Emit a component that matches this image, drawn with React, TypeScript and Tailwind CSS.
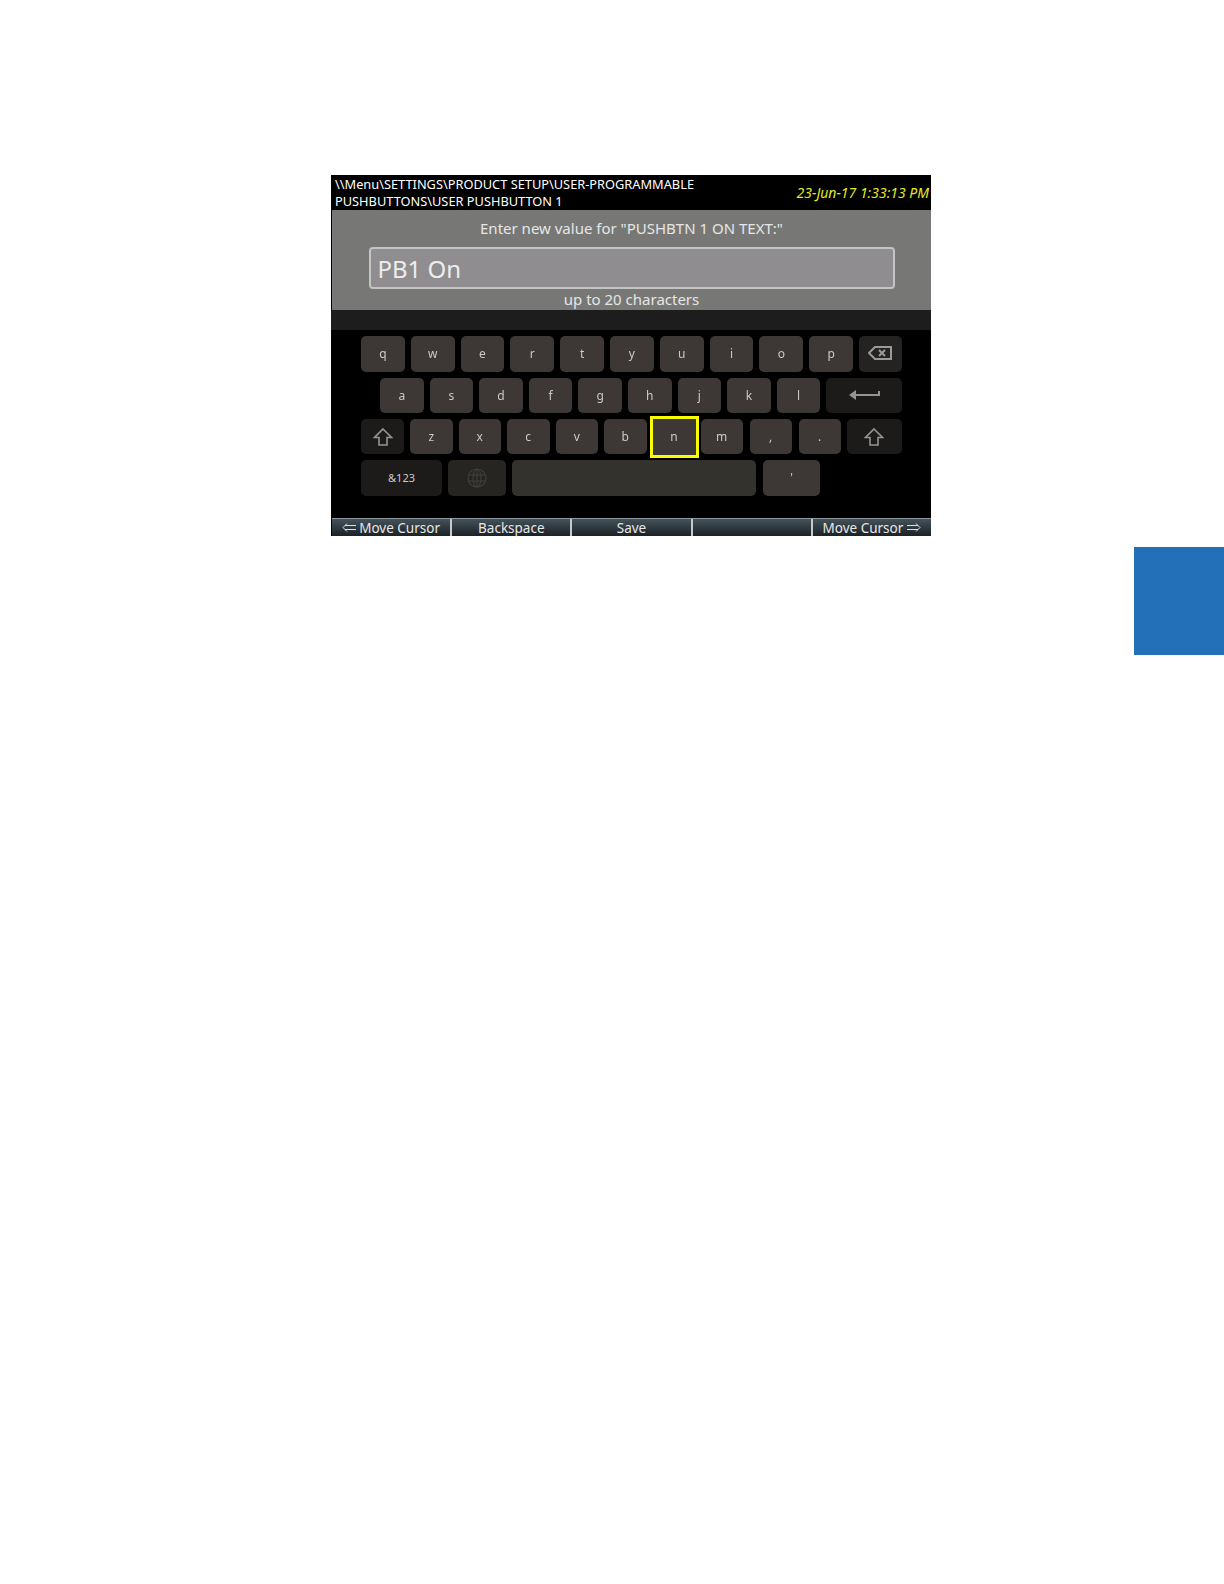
const font = { fontFamily: '"Noto Sans", "Open Sans", sans-serif' };

type KeyProps = {
  label?: string;
  width: string;
  tone?: string;
  children?: React.ReactNode;
};

function Key({ label, width, tone = 'bg-[#3e3937]', children }: KeyProps) {
  return (
    <div className={`${width} ${tone} h-full rounded-[5px] flex items-center justify-center text-[12px] text-[#cfcccb]`}>
      {label}
      {children}
    </div>
  );
}

function ShiftIcon() {
  return (
    <svg width="20" height="20" viewBox="0 0 20 20" fill="none" stroke="#969696" strokeWidth="1.6">
      <path d="M10 2 L18.5 10.5 H14 V18 H6 V10.5 H1.5 Z" />
    </svg>
  );
}

function BackspaceIcon() {
  return (
    <svg width="24" height="14" viewBox="0 0 24 14" fill="none" stroke="#9c9c9c" strokeWidth="2" className="-mt-[2px]">
      <path d="M7 1 H23 V13 H7 L1 7 Z" />
      <path d="M11 4 L17 10 M17 4 L11 10" />
    </svg>
  );
}

function EnterIcon() {
  return (
    <svg width="32" height="12" viewBox="0 0 32 12" fill="#969696" className="-mt-[2px] ml-[2px]">
      <path d="M0 6 L7 1 V5 H29 V2 H31 V7 H7 V11 Z" />
    </svg>
  );
}

function GlobeIcon() {
  return (
    <svg width="20" height="20" viewBox="0 0 20 20" fill="none" stroke="#42403c" strokeWidth="1.1">
      <circle cx="10" cy="10" r="9" />
      <ellipse cx="10" cy="10" rx="4" ry="9" />
      <path d="M10 1 V19 M1.5 7 H18.5 M1.5 13 H18.5" />
    </svg>
  );
}

function ArrowLeft() {
  return (
    <svg width="14" height="9" viewBox="0 0 14 9" fill="none" stroke="#e0e0e0" strokeWidth="1" className="mr-[3px]">
      <path d="M14 2.5 H3 M14 6.5 H3 M5 0.5 L1 4.5 L5 8.5" />
    </svg>
  );
}

function ArrowRight() {
  return (
    <svg width="14" height="9" viewBox="0 0 14 9" fill="none" stroke="#e0e0e0" strokeWidth="1" className="ml-[4px]">
      <path d="M0 2.5 H11 M0 6.5 H11 M9 0.5 L13 4.5 L9 8.5" />
    </svg>
  );
}

export default function App() {
  const softKeys = ['Move Cursor', 'Backspace', 'Save', '', 'Move Cursor'];

  return (
    <div className="flex min-h-[1584px] w-[1224px] bg-white" style={font}>
      <div className="ml-[331px] mt-[175px] h-[361px] w-[600px] bg-black flex flex-col">
        {/* Header */}
        <div className="h-[35px] flex justify-between text-[12.8px] leading-[17px] text-white pl-[4px] pr-[2px] pt-[1px]">
          <div className="w-[420px] whitespace-nowrap">
            <div>\\Menu\SETTINGS\PRODUCT SETUP\USER-PROGRAMMABLE</div>
            <div>PUSHBUTTONS\USER PUSHBUTTON 1</div>
          </div>
          <div className="mt-[8px] italic text-[14px] text-[#e2ea2a] whitespace-nowrap">23-Jun-17 1:33:13 PM</div>
        </div>

        {/* Prompt */}
        <div className="h-[100px] bg-[#777876] flex flex-col items-center text-[#e6e6e6] ml-[1px]">
          <div className="mt-[9px] h-[18px] text-[15px] leading-[18px]">Enter new value for "PUSHBTN 1 ON TEXT:"</div>
          <div className="mt-[10px] h-[42px] w-[526px] rounded-[4px] border-2 border-[#c4c4c4] bg-[#8f8d90] pl-[7px] text-[24px] leading-[40px] text-[#ededed]">
            PB1 On
          </div>
          <div className="mt-[1px] text-[15px] leading-[18px]">up to 20 characters</div>
        </div>
        <div className="h-[20px] bg-[#1d1d1d]" />

        {/* Keyboard */}
        <div className="flex-1 flex flex-col pt-[6px] opacity-[0.99]">
          <div className="h-[36px] flex gap-[6px] pl-[30px]">
            {['q', 'w', 'e', 'r', 't', 'y', 'u', 'i', 'o', 'p'].map((k) => (
              <Key key={k} label={k} width="w-[43.8px]" />
            ))}
            <Key width="w-[43px]" tone="bg-[#262423]"><BackspaceIcon /></Key>
          </div>
          <div className="h-[35px] mt-[6px] flex gap-[6px] pl-[49px]">
            {['a', 's', 'd', 'f', 'g', 'h', 'j', 'k', 'l'].map((k) => (
              <Key key={k} label={k} width="w-[43.6px]" />
            ))}
            <Key width="w-[76px]" tone="bg-[#1e1c1b]"><EnterIcon /></Key>
          </div>
          <div className="h-[35px] mt-[6px] flex pl-[30px]">
            <Key width="w-[43px]" tone="bg-[#1e1c1b]"><ShiftIcon /></Key>
            <div className="flex gap-[6px] ml-[6px] h-full">
              {['z', 'x', 'c', 'v', 'b'].map((k) => (
                <Key key={k} label={k} width="w-[42.5px]" />
              ))}
            </div>
            <div className="ml-[3px] -mt-[3px] h-[42px] w-[49px] border-[3px] border-[#ffff00] bg-[#3e3937] flex items-center justify-center text-[12px] text-[#cfcccb]">
              n
            </div>
            <div className="flex gap-[7px] ml-[2px] h-full">
              {['m', ',', '.'].map((k) => (
                <Key key={k} label={k} width="w-[42px]" />
              ))}
            </div>
            <div className="ml-[6px] h-full">
              <Key width="w-[55px]" tone="bg-[#1e1c1b]"><ShiftIcon /></Key>
            </div>
          </div>
          <div className="h-[36px] mt-[6px] flex gap-[6px] pl-[30px]">
            <Key width="w-[81px]" tone="bg-[#1e1c1b]"><span className="text-[11px]">&amp;123</span></Key>
            <Key width="w-[58px]" tone="bg-[#282623]"><GlobeIcon /></Key>
            <Key width="w-[244px]" tone="bg-[#35332e]" />
            <div className="ml-[1px] h-full">
              <Key label="'" width="w-[57px]" />
            </div>
          </div>
        </div>

        {/* Soft keys */}
        <div className="h-[18px] flex border-t border-[#8d9aa0] bg-gradient-to-b from-[#44525a] to-[#1c2226] ml-[1px]">
          {softKeys.map((label, i) => (
            <div
              key={i}
              className={`flex-1 flex items-center justify-center text-[13.5px] leading-[16px] text-[#e8e8e8] whitespace-nowrap ${i > 0 ? 'border-l-2 border-[#c9c9c9]' : ''}`}
            >
              {i === 0 && <ArrowLeft />}
              {label}
              {i === 4 && <ArrowRight />}
            </div>
          ))}
        </div>
      </div>

      {/* Chapter tab */}
      <div className="ml-auto mt-[547px] h-[108px] w-[90px] bg-[#2370b9]" />
    </div>
  );
}
